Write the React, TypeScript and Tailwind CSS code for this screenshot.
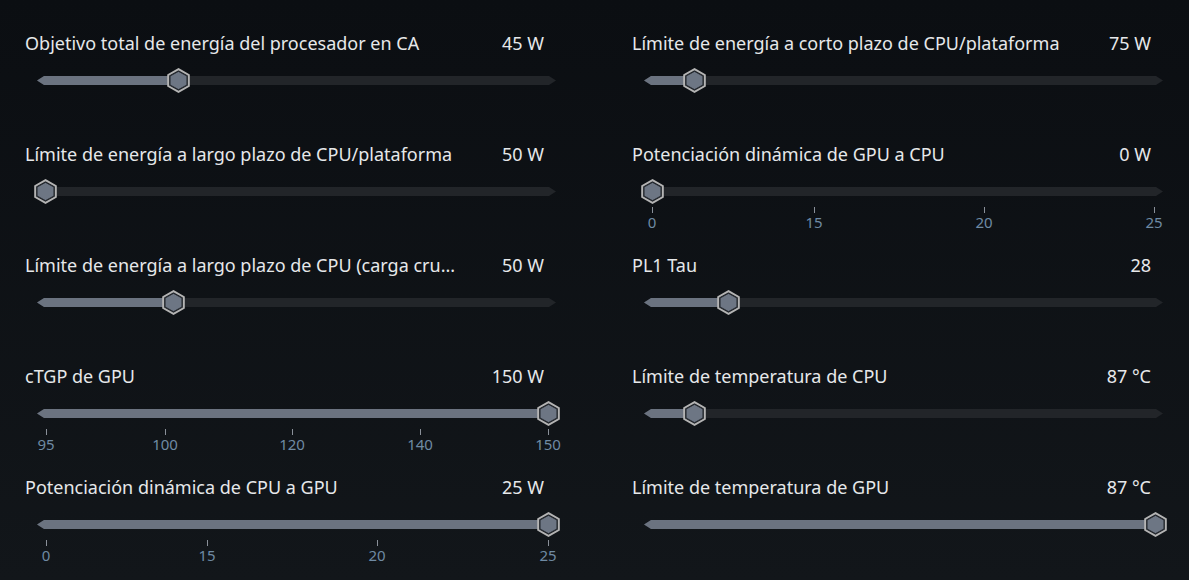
import React from "react";

type Tick = { label: string; x: number };
type Row = { label: string; value: string; p: number; ticks?: Tick[] };

const left: Row[] = [
  { label: "Objetivo total de energía del procesador en CA", value: "45 W", p: 0.266 },
  { label: "Límite de energía a largo plazo de CPU/plataforma", value: "50 W", p: 0 },
  { label: "Límite de energía a largo plazo de CPU (carga cru...", value: "50 W", p: 0.256 },
  {
    label: "cTGP de GPU",
    value: "150 W",
    p: 1,
    ticks: [
      { label: "95", x: 9 },
      { label: "100", x: 128 },
      { label: "120", x: 255 },
      { label: "140", x: 383 },
      { label: "150", x: 511 },
    ],
  },
  {
    label: "Potenciación dinámica de CPU a GPU",
    value: "25 W",
    p: 1,
    ticks: [
      { label: "0", x: 9 },
      { label: "15", x: 170 },
      { label: "20", x: 340 },
      { label: "25", x: 511 },
    ],
  },
];

const right: Row[] = [
  { label: "Límite de energía a corto plazo de CPU/plataforma", value: "75 W", p: 0.084 },
  {
    label: "Potenciación dinámica de GPU a CPU",
    value: "0 W",
    p: 0,
    ticks: [
      { label: "0", x: 8 },
      { label: "15", x: 170 },
      { label: "20", x: 340 },
      { label: "25", x: 510 },
    ],
  },
  { label: "PL1 Tau", value: "28", p: 0.153 },
  { label: "Límite de temperatura de CPU", value: "87 °C", p: 0.084 },
  { label: "Límite de temperatura de GPU", value: "87 °C", p: 1 },
];

function Hex() {
  return (
    <svg width="23" height="25" viewBox="0 0 23 25">
      <polygon
        points="11.5,1.2 21.8,7 21.8,18 11.5,23.8 1.2,18 1.2,7"
        fill="#1b1f24"
        stroke="#b4b4b4"
        strokeWidth="2"
      />
      <polygon
        points="11.5,3.4 19.9,8.1 19.9,16.9 11.5,21.6 3.1,16.9 3.1,8.1"
        fill="#6d7684"
        stroke="#262a30"
        strokeWidth="0.8"
      />
    </svg>
  );
}

function Slider({ row }: { row: Row }) {
  const TW = 519;
  const center = 8 + row.p * (TW - 16);
  return (
    <div className="flex flex-col">
      <div className="flex h-6 items-center justify-between pr-3 text-[18px] leading-6 text-[#e6e8ea]">
        <span className="whitespace-nowrap">{row.label}</span>
        <span className="whitespace-nowrap">{row.value}</span>
      </div>
      <div className="relative ml-3 mt-[13px] h-[25px] w-[519px]">
        <div className="absolute left-0 right-0 top-[8px] h-[9px] bg-[#222529] [clip-path:polygon(0_50%,7px_0,calc(100%-7px)_0,100%_50%,calc(100%-7px)_100%,7px_100%)]">
          <div className="h-full bg-[#6b7380]" style={{ width: center }} />
        </div>
        <div className="absolute top-0" style={{ left: center - 11.5 }}>
          <Hex />
        </div>
        {row.ticks?.map((t) => (
          <div
            key={t.label}
            className="absolute top-[28px] flex w-10 flex-col items-center"
            style={{ left: t.x - 20 }}
          >
            <div className="h-[6px] w-px bg-[#8a9099]" />
            <span className="-mt-[1px] text-[15px] leading-[20px] text-[#6f8aa3]">{t.label}</span>
          </div>
        ))}
      </div>
    </div>
  );
}

export default function App() {
  return (
    <div
      className="h-[580px] w-[1189px] overflow-hidden bg-gradient-to-b from-[#0b0e12] to-[#12161a] px-[25px] pt-[31px]"
      style={{ fontFamily: '"Noto Sans", "Open Sans", sans-serif' }}
    >
      <div className="flex gap-[76px]">
        {[left, right].map((col, i) => (
          <div key={i} className="flex w-[531px] flex-col">
            {col.map((r) => (
              <div key={r.label} className="h-[111px]">
                <Slider row={r} />
              </div>
            ))}
          </div>
        ))}
      </div>
    </div>
  );
}
